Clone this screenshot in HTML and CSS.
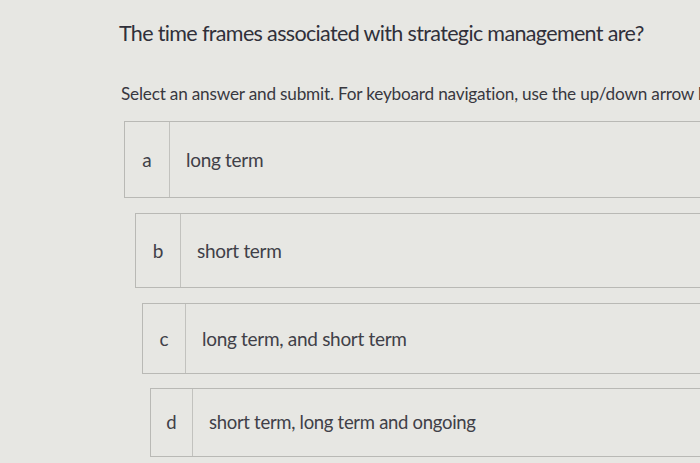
FILE: index.html
```html
<!DOCTYPE html>
<html>
<head>
<meta charset="utf-8">
<link rel="stylesheet" href="styles.css">
</head>
<body>
<main class="page">
  <h1 class="question">The time frames associated with strategic management are?</h1>
  <p class="hint">Select an answer and submit. For keyboard navigation, use the up/down arrow keys to select an answer.</p>
  <ul class="options">
    <li class="option"><span class="letter">a</span><span class="answer">long term</span></li>
    <li class="option"><span class="letter">b</span><span class="answer">short term</span></li>
    <li class="option"><span class="letter">c</span><span class="answer">long term, and short term</span></li>
    <li class="option"><span class="letter">d</span><span class="answer">short term, long term and ongoing</span></li>
  </ul>
</main>
</body>
</html>
```
FILE: styles.css
```css
html, body {
  margin: 0;
  padding: 0;
  background: #e7e7e3;
  overflow: hidden;
}
.page {
  width: 700px;
  height: 463px;
  padding: 18px 0 0 119px;
  box-sizing: border-box;
  font-family: Lato, "Open Sans", sans-serif;
  color: #3a3a44;
  overflow: hidden;
}
.question {
  margin: 0;
  font-size: 21.5px;
  font-weight: 400;
  line-height: 30px;
  letter-spacing: -0.65px;
  white-space: nowrap;
  color: #30303a;
}
.hint {
  margin: 34px 0 0 2px;
  font-size: 17.2px;
  line-height: 24px;
  white-space: nowrap;
  color: #38383f;
  letter-spacing: -0.2px;
}
.options {
  list-style: none;
  margin: 15px 0 0 0;
  padding: 0;
  display: flex;
  flex-direction: column;
  gap: 15px;
}
.option {
  display: flex;
  align-items: center;
  width: 700px;
  border: 1.5px solid #b9b9b5;
  border-right: none;
  box-sizing: border-box;
  font-size: 19px;
  color: #404048;
}
.letter {
  align-self: stretch;
  display: flex;
  align-items: center;
  justify-content: center;
  width: 45px;
  border-right: 1.5px solid #c2c2be;
  box-sizing: border-box;
  padding-bottom: 1px;
}
.answer {
  padding: 0 0 1px 16px;
  letter-spacing: -0.3px;
}
.option:nth-child(1) { margin-left: 5px; height: 77px; }
.option:nth-child(2) { margin-left: 16px; height: 75px; }
.option:nth-child(3) { margin-left: 23px; height: 71px; }
.option:nth-child(3) .letter { width: 43px; }
.option:nth-child(4) { margin-left: 31px; height: 69px; margin-top: -1px; font-size: 18.5px; }
.option:nth-child(4) .letter { width: 42px; }
```
